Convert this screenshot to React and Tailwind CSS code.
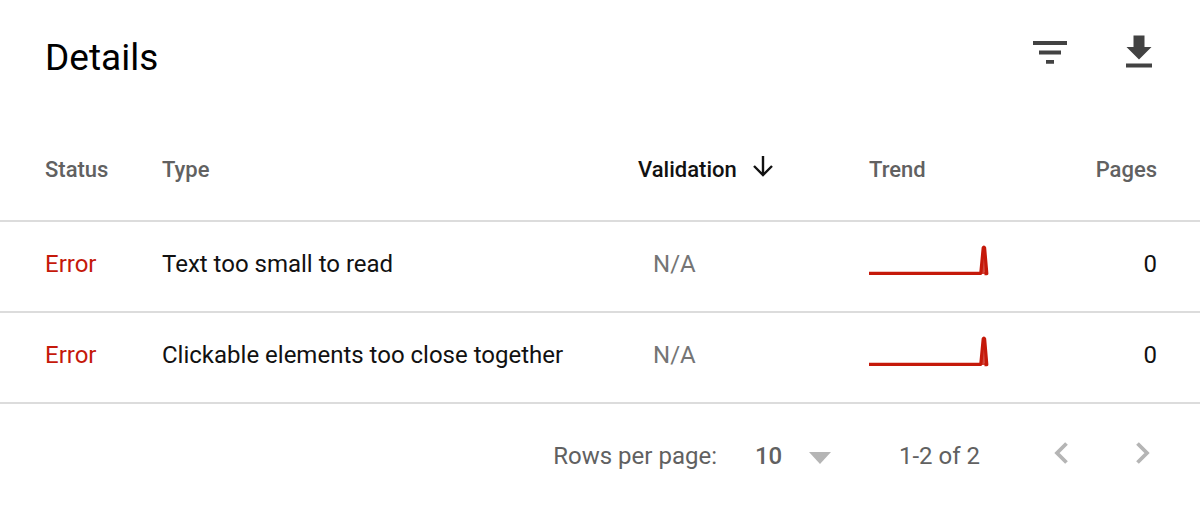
const rows = [
  { status: "Error", type: "Text too small to read", validation: "N/A", pages: 0 },
  { status: "Error", type: "Clickable elements too close together", validation: "N/A", pages: 0 },
];

function Sparkline() {
  return (
    <svg width="120" height="32" viewBox="0 0 120 32" className="block" role="img" aria-label="Trend">
      <path d="M111.5 29 L114.7 3 L117.8 29 Z" fill="#d2473c" />
      <path
        d="M0 28.300 H111.8 L114.200 3 Q114.900 1.400 115.600 3 L117.800 28.600 H115.500"
        fill="none"
        stroke="#c5190a"
        strokeWidth="3.200"
        strokeLinejoin="round"
      />
    </svg>
  );
}

export default function App() {
  return (
    <main className="w-full bg-white font-['Roboto',sans-serif] text-[#111111]">
      <header className="flex h-[116px] items-start justify-between pt-8 pr-[42px] pl-[45px]">
        <h1 className="text-[37px] leading-[52px] font-normal text-black">Details</h1>
        <div className="flex gap-12">
          <button type="button" aria-label="Filter" className="flex h-10 w-10 items-center justify-center">
            <svg width="40" height="40" viewBox="0 0 40 40" fill="#424242">
              <path d="M3 9h34v4H3zM9 18.500h22v4H9zM16 28h8v3.800h-8z" />
            </svg>
          </button>
          <button type="button" aria-label="Download" className="flex h-10 w-10 items-center justify-center">
            <svg width="40" height="40" viewBox="0 0 40 40" fill="#424242">
              <path d="M15.500 3.500h11v11.500h7L21 27.500 8.500 15h7zM8 31.500h26v4H8z" />
            </svg>
          </button>
        </div>
      </header>

      <table className="w-full table-fixed border-separate border-spacing-0 text-left">
        <colgroup>
          <col className="w-[13.5%]" />
          <col className="w-[39.67%]" />
          <col className="w-[19.25%]" />
          <col />
        </colgroup>
        <thead>
          <tr className="h-[106px] text-[22px] leading-8 text-[#616161]">
            <th scope="col" className="border-b-2 border-[#dcdcdc] p-0 pt-1 pl-[45px] font-medium">Status</th>
            <th scope="col" className="border-b-2 border-[#dcdcdc] p-0 pt-1 font-medium">Type</th>
            <th scope="col" aria-sort="descending" className="border-b-2 border-[#dcdcdc] p-0 pt-1 font-medium text-[#111111]">
              <button type="button" className="flex items-center gap-4">
                Validation
                <svg width="20" height="28" viewBox="0 0 20 28" fill="none" stroke="#111111" strokeWidth="2.400">
                  <path d="M10 0V19M1 10l9 9 9-9" />
                </svg>
              </button>
            </th>
            <th scope="col" className="border-b-2 border-[#dcdcdc] p-0 pt-1 font-medium">Trend</th>
            <th scope="col" className="border-b-2 border-[#dcdcdc] p-0 pt-1 pr-[43px] text-right font-medium">Pages</th>
          </tr>
        </thead>
        <tbody>
          {rows.map((row) => (
            <tr key={row.type} className="h-[91px] text-2xl leading-8">
              <td className="border-b-2 border-[#dcdcdc] p-0 pb-1.5 pl-[45px] text-[#c5190a]">{row.status}</td>
              <td className="border-b-2 border-[#dcdcdc] p-0 pb-1.5">{row.type}</td>
              <td className="border-b-2 border-[#dcdcdc] p-0 pb-1.5 pl-[15px] text-[#757575]">{row.validation}</td>
              <td className="border-b-2 border-[#dcdcdc] p-0 pb-3"><Sparkline /></td>
              <td className="border-b-2 border-[#dcdcdc] p-0 pr-[43px] pb-1.5 text-right">{row.pages}</td>
            </tr>
          ))}
        </tbody>
      </table>

      <footer className="flex h-[104px] items-center justify-end pr-[42px] text-2xl leading-8 text-[#616161]">
        <label htmlFor="rows-per-page">Rows per page:</label>
        <div className="relative ml-[38px] flex items-center">
          <select id="rows-per-page" defaultValue="10" className="w-20 appearance-none bg-transparent font-medium">
            <option>10</option>
            <option>25</option>
            <option>50</option>
          </select>
          <svg width="22" height="12" viewBox="0 0 22 12" className="pointer-events-none absolute right-1 mt-1" fill="#b5b5b5">
            <path d="M0 0h22L11 12z" />
          </svg>
        </div>
        <span className="ml-16">1-2 of 2</span>
        <nav aria-label="Pagination" className="ml-[66px] flex gap-[52px] pb-1.5">
          <button type="button" aria-label="Previous page" className="flex h-8 w-[30px] items-center justify-center">
            <svg width="30" height="32" viewBox="0 0 30 32" fill="none" stroke="#b5b5b5" strokeWidth="3.800">
              <path d="M20.500 6.500L11 16l9.500 9.500" />
            </svg>
          </button>
          <button type="button" aria-label="Next page" className="flex h-8 w-[30px] items-center justify-center">
            <svg width="30" height="32" viewBox="0 0 30 32" fill="none" stroke="#b5b5b5" strokeWidth="3.800">
              <path d="M9.500 6.500L19 16l-9.500 9.500" />
            </svg>
          </button>
        </nav>
      </footer>
    </main>
  );
}
